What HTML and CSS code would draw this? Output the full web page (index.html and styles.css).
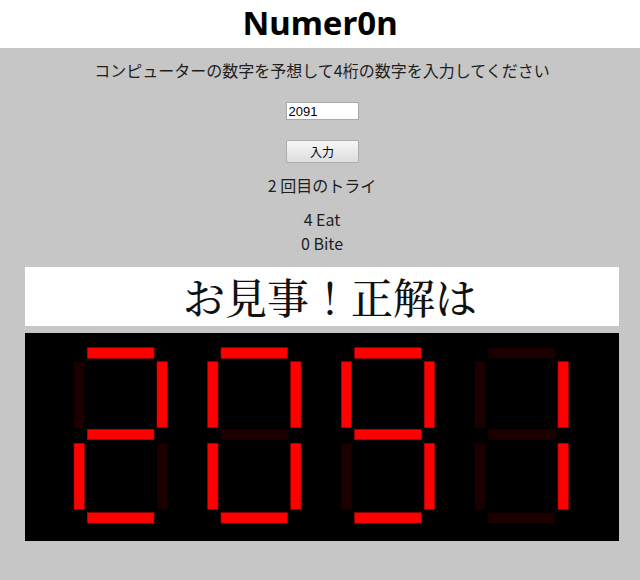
FILE: index.html
```html
<!DOCTYPE html>
<html lang="ja">
<head>
<meta charset="utf-8">
<title>Numer0n</title>
<link rel="stylesheet" href="styles.css">
</head>
<body>
<header class="header">
  <h1 class="title">Numer0n</h1>
</header>
<main class="game">
  <p class="instruction">コンピューターの数字を予想して4桁の数字を入力してください</p>
  <input class="guess" type="text" value="2091">
  <button class="submit" type="button">入力</button>
  <p class="tries">2 回目のトライ</p>
  <div class="result">
    <p class="line">4 Eat</p>
    <p class="line">0 Bite</p>
  </div>
  <div class="message">お見事！正解は</div>
  <div class="display">
    <svg class="segments" viewBox="0 0 594 208" width="594" height="208">
      <g transform="translate(49,0)">
        <rect class="off" x="0" y="28.7" width="10.3" height="66"/>
        <rect class="on" x="13.3" y="14.7" width="66.7" height="10.6"/>
        <rect class="on" x="83" y="28.7" width="10.3" height="66"/>
        <rect class="on" x="13.3" y="96.3" width="66.7" height="10.4"/>
        <rect class="on" x="0" y="110.3" width="10.3" height="66"/>
        <rect class="off" x="83" y="110.3" width="10.3" height="66"/>
        <rect class="on" x="13.3" y="179.7" width="66.7" height="10.4"/>
      </g>
      <g transform="translate(182.7,0)">
        <rect class="on" x="0" y="28.7" width="10.3" height="66"/>
        <rect class="on" x="13.3" y="14.7" width="66.7" height="10.6"/>
        <rect class="on" x="83" y="28.7" width="10.3" height="66"/>
        <rect class="off" x="13.3" y="96.3" width="66.7" height="10.4"/>
        <rect class="on" x="0" y="110.3" width="10.3" height="66"/>
        <rect class="on" x="83" y="110.3" width="10.3" height="66"/>
        <rect class="on" x="13.3" y="179.7" width="66.7" height="10.4"/>
      </g>
      <g transform="translate(316.3,0)">
        <rect class="on" x="0" y="28.7" width="10.3" height="66"/>
        <rect class="on" x="13.3" y="14.7" width="66.7" height="10.6"/>
        <rect class="on" x="83" y="28.7" width="10.3" height="66"/>
        <rect class="on" x="13.3" y="96.3" width="66.7" height="10.4"/>
        <rect class="off" x="0" y="110.3" width="10.3" height="66"/>
        <rect class="on" x="83" y="110.3" width="10.3" height="66"/>
        <rect class="on" x="13.3" y="179.7" width="66.7" height="10.4"/>
      </g>
      <g transform="translate(450,0)">
        <rect class="off" x="0" y="28.7" width="10.3" height="66"/>
        <rect class="off" x="13.3" y="14.7" width="66.7" height="10.6"/>
        <rect class="on" x="83" y="28.7" width="10.3" height="66"/>
        <rect class="off" x="13.3" y="96.3" width="66.7" height="10.4"/>
        <rect class="off" x="0" y="110.3" width="10.3" height="66"/>
        <rect class="on" x="83" y="110.3" width="10.3" height="66"/>
        <rect class="off" x="13.3" y="179.7" width="66.7" height="10.4"/>
      </g>
    </svg>
  </div>
</main>
</body>
</html>
```
FILE: styles.css
```css
html, body {
  margin: 0;
  padding: 0;
}
body {
  background: #c6c6c6;
  font-family: "Noto Sans CJK JP", "Noto Sans", sans-serif;
  color: #1e1e1e;
}
.header {
  background: #ffffff;
  height: 48px;
}
.title {
  margin: 0;
  font-family: "Noto Sans", "Noto Sans CJK JP", sans-serif;
  font-weight: 700;
  font-size: 33px;
  line-height: 46px;
  text-align: center;
  color: #000;
}
.game {
  display: flex;
  flex-direction: column;
  align-items: center;
  width: 594px;
  margin-left: 25px;
  padding-top: 10px;
}
.instruction {
  margin: 0;
  font-size: 16px;
  line-height: 24px;
  white-space: nowrap;
}
.guess {
  margin-top: 20px;
  box-sizing: border-box;
  width: 73px;
  height: 18px;
  padding: 0 2px;
  border: 1px solid #a9a9a9;
  background: #fff;
  font-family: "Liberation Sans", Arial, sans-serif;
  font-size: 13px;
  color: #000;
}
.submit {
  margin-top: 20px;
  box-sizing: border-box;
  width: 73px;
  height: 23px;
  padding: 0;
  border: 1px solid #adadad;
  border-radius: 2px;
  background: linear-gradient(#f6f6f6, #dedede);
  font-family: "Noto Sans CJK JP", sans-serif;
  font-size: 12px;
  color: #000;
}
.tries {
  margin: 10px 0 0;
  font-size: 16px;
  line-height: 24px;
}
.result {
  margin-top: 10px;
  display: flex;
  flex-direction: column;
  align-items: center;
}
.line {
  margin: 0;
  font-size: 16px;
  line-height: 24px;
}
.message {
  margin-top: 12px;
  box-sizing: border-box;
  width: 594px;
  height: 59px;
  padding-left: 16px;
  background: #fff;
  color: #111;
  text-align: center;
  font-family: "Noto Serif CJK JP", "Noto Sans CJK JP", serif;
  font-weight: 500;
  font-size: 42px;
  line-height: 59px;
}
.display {
  margin-top: 7px;
  width: 594px;
  height: 208px;
  background: #000;
}
.segments {
  display: block;
}
.on {
  fill: #ff0000;
  stroke: #b00000;
  stroke-width: 0.6;
}
.off {
  fill: #1c0000;
}
```
